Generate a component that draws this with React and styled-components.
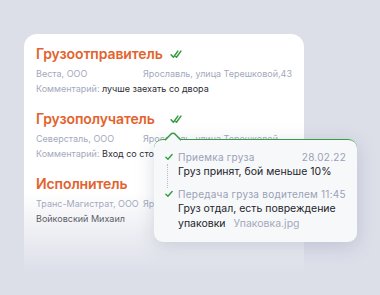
import React from "react";
import styled, { createGlobalStyle } from "styled-components";

const Global = createGlobalStyle`
  html, body {
    margin: 0;
    padding: 0;
    background: #dcdee8;
    font-family: Inter, "Noto Sans", sans-serif;
  }
`;

const Page = styled.div`
  width: 380px;
  height: 295px;
  padding: 34px 0 0 24px;
  box-sizing: border-box;
  overflow: hidden;
`;

const Card = styled.div`
  position: relative;
  width: 280px;
  height: 240px;
  padding: 10px 12px 0;
  box-sizing: border-box;
  border-radius: 13px 13px 0 0;
  background: linear-gradient(
    to bottom,
    #ffffff 0%,
    #ffffff 66%,
    rgba(255, 255, 255, 0) 100%
  );
`;

const Section = styled.div`
  margin-bottom: 13px;
`;

const TitleRow = styled.div`
  display: flex;
  align-items: center;
  height: 20px;
`;

const Title = styled.h2`
  margin: 0;
  width: 134px;
  font-size: 14px;
  line-height: 20px;
  font-weight: 600;
  letter-spacing: -0.1px;
  color: #e2632d;
`;

const InfoRow = styled.div`
  display: flex;
  margin-top: ${(p) => p.$top || 0}px;
  font-size: 9px;
  line-height: 15px;
  color: #a4a9bb;
  white-space: nowrap;
  overflow: hidden;
`;

const Company = styled.span`
  width: 107px;
  flex-shrink: 0;
`;

const Dark = styled.span`
  color: ${(p) => p.$color || "#2b2d33"};
`;

const Popover = styled.div`
  position: absolute;
  left: 130px;
  top: 105px;
  width: 203px;
  height: 103px;
  box-sizing: border-box;
  padding: 10px 11px 0 12px;
  background: #f7f8fa;
  border-top: 1.5px solid #3a9a45;
  border-radius: 9px;
  box-shadow: 0 4px 18px rgba(120, 128, 160, 0.28);
`;

const Caret = styled.svg`
  position: absolute;
  left: 11px;
  top: -8px;
`;

const Step = styled.div`
  position: relative;
  padding-left: 12px;
  margin-bottom: ${(p) => p.$mb || 0}px;
`;

const StepHead = styled.div`
  display: flex;
  justify-content: space-between;
  font-size: 10px;
  line-height: 14px;
  letter-spacing: 0.25px;
  white-space: nowrap;
  color: #9aa1b7;
`;

const StepText = styled.div`
  font-size: 10.5px;
  line-height: 15px;
  color: #22242a;
`;

const File = styled.span`
  margin-left: 8px;
  color: #a4a9bb;
`;

const StepCheck = styled.svg`
  position: absolute;
  left: -1px;
  top: 3px;
`;

const Dotted = styled.div`
  position: absolute;
  left: 1px;
  top: 14px;
  height: 24px;
  border-left: 1px dotted #b9bdc9;
`;

function DoubleCheck() {
  return (
    <svg width="12" height="9" viewBox="0 0 13 10" fill="none">
      <path d="M1 5.2 L3.6 8 L8.6 1.2" stroke="#2f9a3e" strokeWidth="1.6" strokeLinecap="round" strokeLinejoin="round" />
      <path d="M6.2 7.2 L7 8 L12 1.2" stroke="#2f9a3e" strokeWidth="1.6" strokeLinecap="round" strokeLinejoin="round" />
    </svg>
  );
}

function Check() {
  return (
    <StepCheck width="8" height="8" viewBox="0 0 9 8" fill="none">
      <path d="M1 4.2 L3.3 6.6 L8 1.2" stroke="#2f9a3e" strokeWidth="1.5" strokeLinecap="round" strokeLinejoin="round" />
    </StepCheck>
  );
}

export default function App() {
  return (
    <Page>
      <Global />
      <Card>
        <Section>
          <TitleRow>
            <Title>Грузоотправитель</Title>
            <DoubleCheck />
          </TitleRow>
          <InfoRow $top={2}>
            <Company>Веста, ООО</Company>
            <span>Ярославль, улица Терешковой,43</span>
          </InfoRow>
          <InfoRow>
            Комментарий:&nbsp;<Dark>лучше заехать со двора</Dark>
          </InfoRow>
        </Section>
        <Section>
          <TitleRow>
            <Title>Грузополучатель</Title>
            <DoubleCheck />
          </TitleRow>
          <InfoRow $top={2}>
            <Company>Северсталь, ООО</Company>
            <span>Ярославль, улица Терешковой</span>
          </InfoRow>
          <InfoRow>
            Комментарий:&nbsp;<Dark>Вход со стороны склада</Dark>
          </InfoRow>
        </Section>
        <Section>
          <TitleRow>
            <Title>Исполнитель</Title>
          </TitleRow>
          <InfoRow $top={2}>
            <Company>Транс-Магистрат, ООО</Company>
            <span>Ярославль</span>
          </InfoRow>
          <InfoRow>
            <Dark $color="#5b5e68">Войковский Михаил</Dark>
          </InfoRow>
        </Section>

        <Popover>
          <Caret width="16" height="9" viewBox="0 0 16 9">
            <path d="M0 8.2 L5.6 2.4 Q8 0.2 10.4 2.4 L16 8.2" fill="#f7f8fa" stroke="#3a9a45" strokeWidth="1.5" strokeLinejoin="round" />
          </Caret>
          <Step $mb={8}>
            <Check />
            <Dotted />
            <StepHead>
              <span>Приемка груза</span>
              <span>28.02.22</span>
            </StepHead>
            <StepText>Груз принят, бой меньше 10%</StepText>
          </Step>
          <Step>
            <Check />
            <StepHead>
              <span>Передача груза водителем 11:45</span>
            </StepHead>
            <StepText>
              Груз отдал, есть повреждение
              <br />
              упаковки<File>Упаковка.jpg</File>
            </StepText>
          </Step>
        </Popover>
      </Card>
    </Page>
  );
}
